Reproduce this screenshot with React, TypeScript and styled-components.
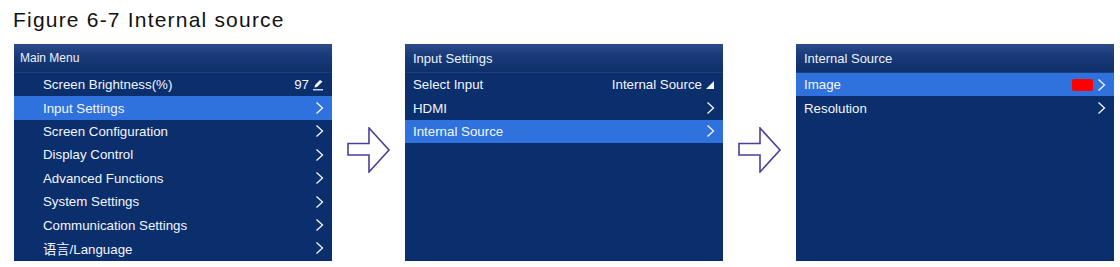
import React from "react";
import styled, { createGlobalStyle } from "styled-components";

const GlobalStyle = createGlobalStyle`
  body {
    margin: 0;
    background: #ffffff;
    font-family: "Liberation Sans", Arial, "Noto Sans CJK SC", sans-serif;
  }
`;

const Page = styled.div`
  width: 1120px;
  height: 267px;
  overflow: hidden;
  background: #ffffff;
`;

const Title = styled.h1`
  margin: 0;
  padding: 7px 0 0 13px;
  height: 44px;
  box-sizing: border-box;
  font-size: 21px;
  font-weight: normal;
  letter-spacing: 1.2px;
  line-height: 25px;
  color: #111111;
`;

const Flow = styled.div`
  display: flex;
  padding-left: 14px;
`;

const Panel = styled.div`
  width: 318px;
  height: 217px;
  background: #0b2e6c;
  display: flex;
  flex-direction: column;
`;

const PanelHeader = styled.div<{ $indent: number; $size: number }>`
  height: 29px;
  flex: none;
  display: flex;
  align-items: center;
  padding-left: ${p => p.$indent}px;
  font-size: ${p => p.$size}px;
  color: #eef2fb;
  background: linear-gradient(#2c4b89 0%, #183a78 45%, #0f2f69 100%);
  border-bottom: 1px solid #1f3f7c;
  box-sizing: border-box;
`;

const Row = styled.div<{ $active?: boolean; $indent: number }>`
  height: 23.4px;
  flex: none;
  display: flex;
  align-items: center;
  justify-content: space-between;
  padding: 0 8px 0 ${p => p.$indent}px;
  font-size: 13.3px;
  color: #f3f6ff;
  background: ${p => (p.$active ? "#2f72dd" : "transparent")};
`;

const Trail = styled.span`
  display: flex;
  align-items: center;
  gap: 3px;
`;

const Swatch = styled.span`
  width: 21px;
  height: 12px;
  border-radius: 2px;
  background: #ff0000;
  margin-right: 1px;
`;

const ArrowSlot = styled.div`
  width: 73px;
  display: flex;
  justify-content: center;
  padding-top: 83px;
  align-items: flex-start;
`;

const Chevron = () => (
  <svg width="9" height="14" viewBox="0 0 9 14">
    <polyline points="1.5,1.5 7.5,7 1.5,12.5" fill="none" stroke="#f3f6ff" strokeWidth="1.3" />
  </svg>
);

const Pencil = () => (
  <svg width="12" height="12" viewBox="0 0 12 12">
    <polygon points="8,1 10.5,2.5 5,8 2.5,8.5 3,6" fill="#f3f6ff" />
    <rect x="1" y="10" width="10" height="1.5" fill="#c9d2e6" />
  </svg>
);

const Corner = () => (
  <svg width="10" height="10" viewBox="0 0 10 10">
    <polygon points="9,1 9,9 1,9" fill="#f3f6ff" />
  </svg>
);

const FlowArrow = () => (
  <svg width="44" height="46" viewBox="0 0 44 46">
    <polygon
      points="1,16.5 22,16.5 22,1 42,23 22,45 22,28 1,28"
      fill="#ffffff"
      stroke="#4a3f9a"
      strokeWidth="1.6"
      strokeLinejoin="miter"
    />
  </svg>
);

type Item = { label: string; trail?: React.ReactNode; active?: boolean };

const mainMenu: Item[] = [
  { label: "Screen Brightness(%)", trail: <>97 <Pencil /></> },
  { label: "Input Settings", trail: <Chevron />, active: true },
  { label: "Screen Configuration", trail: <Chevron /> },
  { label: "Display Control", trail: <Chevron /> },
  { label: "Advanced Functions", trail: <Chevron /> },
  { label: "System Settings", trail: <Chevron /> },
  { label: "Communication Settings", trail: <Chevron /> },
  { label: "语言/Language", trail: <Chevron /> }
];

const inputMenu: Item[] = [
  { label: "Select Input", trail: <>Internal Source <Corner /></> },
  { label: "HDMI", trail: <Chevron /> },
  { label: "Internal Source", trail: <Chevron />, active: true }
];

const sourceMenu: Item[] = [
  { label: "Image", trail: <><Swatch /><Chevron /></>, active: true },
  { label: "Resolution", trail: <Chevron /> }
];

const Menu: React.FC<{ title: string; items: Item[]; indent: number; headIndent: number; headSize: number }> = ({
  title,
  items,
  indent,
  headIndent,
  headSize
}) => (
  <Panel>
    <PanelHeader $indent={headIndent} $size={headSize}>{title}</PanelHeader>
    {items.map(item => (
      <Row key={item.label} $active={item.active} $indent={indent}>
        <span>{item.label}</span>
        <Trail>{item.trail}</Trail>
      </Row>
    ))}
  </Panel>
);

export default function App() {
  return (
    <Page>
      <GlobalStyle />
      <Title>Figure 6-7 Internal source</Title>
      <Flow>
        <Menu title="Main Menu" items={mainMenu} indent={29} headIndent={6} headSize={12} />
        <ArrowSlot>
          <FlowArrow />
        </ArrowSlot>
        <Menu title="Input Settings" items={inputMenu} indent={8} headIndent={8} headSize={13} />
        <ArrowSlot>
          <FlowArrow />
        </ArrowSlot>
        <Menu title="Internal Source" items={sourceMenu} indent={8} headIndent={8} headSize={13} />
      </Flow>
    </Page>
  );
}
